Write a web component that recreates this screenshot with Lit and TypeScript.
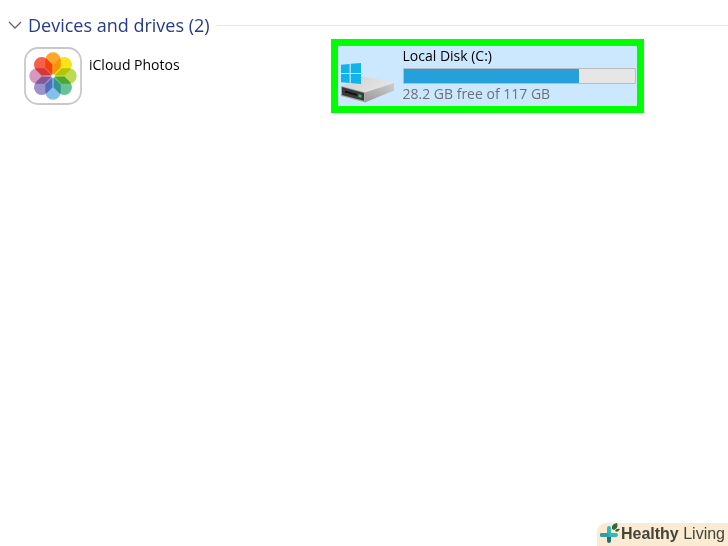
import { LitElement, html, svg, css } from "lit";
import { customElement, property, state } from "lit/decorators.js";

const PETALS = ["#fca62c", "#f7e51a", "#bcdb55", "#66c398", "#84c0ec", "#9b92cc", "#d897be", "#f8604a"];

@customElement("photos-icon")
class PhotosIcon extends LitElement {
  static styles = css`
    :host { display: block; }
    .icon { display: block; width: 58px; height: 58px; }
    .petal { mix-blend-mode: multiply; }
  `;
  render() {
    return html`<svg class="icon" viewBox="0 0 58 58" aria-hidden="true">
      <rect x="1" y="1" width="56" height="56" rx="13" fill="#fff" stroke="#c9c9cb" stroke-width="1.8" />
      ${PETALS.map(
        (c, i) => svg`<path class="petal" d="M29 28 21.300 20.500V13a7.700 7.700 0 0 1 15.400 0V20.500Z" fill=${c} transform="rotate(${i * 45} 29 29)" />`
      )}
      <circle cx="29" cy="29" r="1.8" fill="#fff" />
    </svg>`;
  }
}

@customElement("disk-icon")
class DiskIcon extends LitElement {
  static styles = css`
    :host { display: block; }
    .icon { display: block; width: 54px; height: 40px; }
  `;
  render() {
    return html`<svg class="icon" viewBox="0 0 54 40" aria-hidden="true">
      <defs>
        <linearGradient id="top" x1="0" y1="0" x2="1" y2="0.4">
          <stop offset="0" stop-color="#cfcfcf" /><stop offset="1" stop-color="#e6e6e6" />
        </linearGradient>
        <linearGradient id="side" x1="0" y1="1" x2="1" y2="0">
          <stop offset="0" stop-color="#9a9a9a" /><stop offset="1" stop-color="#cdcdcd" />
        </linearGradient>
      </defs>
      <path d="M1 23 19 14.5Q21 13.500 24 14L51 18.500Q53 19 53 20.500L24 30.500Z" fill="url(#top)" />
      <path d="M24 29.500 53 20v7.500L24 39.5Z" fill="url(#side)" />
      <path d="M0 23 24.5 29.5V39.5L0 33Z" fill="#a5a5a5" />
      <path d="M1 24 23 30v7.800L1 32Z" fill="#3a3a3a" />
      <path d="M4 27.500 16 31v2L4 29.500Z" fill="#111" />
      <path d="M17.500 31.300 20.500 32v2.700L17.500 34Z" fill="#35c04c" />
      <path d="M0 1.8 8.6.9v9H0ZM9.8.7 20 0v9.9H9.8ZM0 11h8.6v9L0 19.2ZM9.8 11H20v10L9.8 20.1Z" fill="#10b4ea" />
    </svg>`;
  }
}

@customElement("drive-tile")
class DriveTile extends LitElement {
  @property() name = "";
  @property() detail = "";
  @property({ type: Number }) used = 0;
  @property({ type: Boolean, reflect: true }) selected = false;

  static styles = css`
    :host { display: block; min-width: 0; }
    .tile {
      box-sizing: border-box;
      display: flex;
      height: 74px;
      border: 7px solid transparent;
      color: #000;
      font: 14px/20px "Open Sans", "Noto Sans", sans-serif;
    }
    .tile.selected { border-color: #00ff00; background: #cce8ff; background-clip: padding-box; }
    .icon { flex: none; padding-top: 1px; }
    .selected .icon { padding: 17px 0 0 3px; }
    .text { flex: 1; min-width: 0; padding: 9px 0 0 7px; white-space: nowrap; }
    .selected .text { padding: 0 1px 0 8px; }
    .name { display: block; }
    .detail { display: block; color: #6d7175; }
    .bar {
      appearance: none;
      display: block;
      box-sizing: border-box;
      width: 100%;
      height: 16px;
      margin-top: 2px;
      border: 1px solid #bcbcbc;
      background: #e6e6e6;
    }
    .bar::-webkit-progress-bar { background: #e6e6e6; }
    .bar::-webkit-progress-value { background: #26a0da; }
  `;
  render() {
    return html`<div class="tile ${this.selected ? "selected" : ""}">
      <div class="icon"><slot></slot></div>
      <div class="text">
        ${this.detail
          ? html`<label class="name" for="usage">${this.name}</label>
              <progress class="bar" id="usage" max="100" .value=${this.used}></progress>
              <span class="detail">${this.detail}</span>`
          : html`<span class="name">${this.name}</span>`}
      </div>
    </div>`;
  }
}

@customElement("app-root")
class AppRoot extends LitElement {
  @state() open = true;

  static styles = css`
    :host {
      display: flex;
      flex-direction: column;
      min-height: 100vh;
      background: #fff;
      font-family: "Open Sans", "Noto Sans", sans-serif;
    }
    .group { display: flex; align-items: center; padding-top: 11px; }
    .toggle {
      display: flex;
      align-items: center;
      gap: 6px;
      padding: 0 0 0 8px;
      border: 0;
      background: none;
      color: #263a86;
      font: 18px/28px "Open Sans", "Noto Sans", sans-serif;
      white-space: nowrap;
    }
    .chevron { width: 14px; height: 10px; }
    .rule { flex: 1; height: 1px; margin-left: 7px; background: #e6e6e6; }
    .grid { display: grid; grid-template-columns: 1fr 1fr; padding: 0 84px 0 17px; }
    .footer { display: flex; justify-content: flex-end; margin-top: auto; }
    .brand {
      display: flex;
      height: 23px;
      padding: 0 3px 0 2px;
      border-radius: 9px 0 0 0;
      background: #faebd2;
      color: #45443a;
      font: 16px/22px "Liberation Sans", Arial, sans-serif;
      white-space: pre;
    }
    .logo { width: 22px; height: 22px; }
  `;
  render() {
    return html`
      <div class="group">
        <button class="toggle" aria-expanded=${this.open} @click=${() => (this.open = !this.open)}>
          <svg class="chevron" viewBox="0 0 14 10" aria-hidden="true">
            <path d="M1 2 7 8 13 2" fill="none" stroke="#666" stroke-width="1.3" />
          </svg>
          Devices and drives (2)
        </button>
        <div class="rule"></div>
      </div>
      ${this.open
        ? html`<div class="grid">
            <drive-tile name="iCloud Photos"><photos-icon></photos-icon></drive-tile>
            <drive-tile selected name="Local Disk (C:)" detail="28.2 GB free of 117 GB" .used=${76}><disk-icon></disk-icon></drive-tile>
          </div>`
        : ""}
      <div class="footer">
        <div class="brand"><svg class="logo" viewBox="0 0 22 22" aria-hidden="true">
            <path d="M10 11V18M3 12H9" stroke="#246f78" stroke-width="4" stroke-linecap="round" />
            <path d="M10 5V12H17" fill="none" stroke="#35b8b8" stroke-width="4" stroke-linecap="round" />
            <path d="M3 12H8" stroke="#2f9fa3" stroke-width="4" stroke-linecap="round" />
            <path d="M13 6Q12 1 18 0Q20 5 15 7Z" fill="#2e6b35" />
            <path d="M16 8Q17 5 21 6Q19 10 16 8Z" fill="#2e6b35" />
          </svg><b>Healthy</b> Living</div>
      </div>
    `;
  }
}
